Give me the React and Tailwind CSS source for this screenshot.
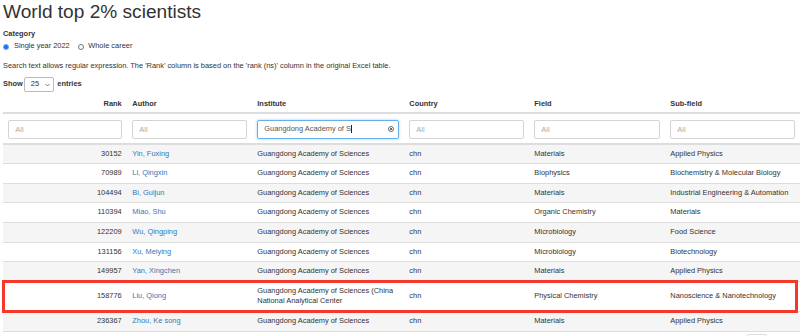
import React from 'react';

const rows = [
  ['30152', 'Yin, Fuxing', 'Guangdong Academy of Sciences', 'chn', 'Materials', 'Applied Physics'],
  ['70989', 'Li, Qingxin', 'Guangdong Academy of Sciences', 'chn', 'Biophysics', 'Biochemistry & Molecular Biology'],
  ['104494', 'Bi, Guijun', 'Guangdong Academy of Sciences', 'chn', 'Materials', 'Industrial Engineering & Automation'],
  ['110394', 'Miao, Shu', 'Guangdong Academy of Sciences', 'chn', 'Organic Chemistry', 'Materials'],
  ['122209', 'Wu, Qingping', 'Guangdong Academy of Sciences', 'chn', 'Microbiology', 'Food Science'],
  ['131156', 'Xu, Meiying', 'Guangdong Academy of Sciences', 'chn', 'Microbiology', 'Biotechnology'],
  ['149957', 'Yan, Xingchen', 'Guangdong Academy of Sciences', 'chn', 'Materials', 'Applied Physics'],
  ['158776', 'Liu, Qiong', 'Guangdong Academy of Sciences (China National Analytical Center', 'chn', 'Physical Chemistry', 'Nanoscience & Nanotechnology'],
  ['236367', 'Zhou, Ke song', 'Guangdong Academy of Sciences', 'chn', 'Materials', 'Applied Physics'],
];

const headers = ['Rank', 'Author', 'Institute', 'Country', 'Field', 'Sub-field'];

const FilterInput = () => (
  <input
    placeholder="All"
    className="block w-full h-[19px] pl-[6px] border border-[#d4d4d4] rounded-[2px] bg-white placeholder:text-[#aaa] outline-none"
  />
);

const App = () => {
  return (
    <div className="w-[800px] h-[336px] overflow-hidden bg-white text-[#333] font-['Liberation_Sans',Arial,sans-serif] text-[7.43px] leading-[10.6px]">
      <div className="pl-[3px]">
        <h1 className="text-[19.1px] leading-[23px]">World top 2% scientists</h1>

        <div className="mt-[5px] h-[11px] leading-[11px] font-bold">Category</div>

        <div className="mt-[2px] h-[11px] flex items-center">
          <span className="w-[6px] h-[6px] rounded-full bg-[#1a73e8] border border-[#6ea3ee]"></span>
          <span className="ml-[5px]">Single year 2022</span>
          <span className="ml-[8px] w-[6px] h-[6px] rounded-full border border-[#777]"></span>
          <span className="ml-[4.5px]">Whole career</span>
        </div>

        <div className="mt-[8px] h-[11px] leading-[11px]">
          Search text allows regular expression. The 'Rank' column is based on the 'rank (ns)' column in the original Excel table.
        </div>

        <div className="mt-[5px] h-[17px] flex items-center font-bold">
          <span>Show</span>
          <div className="ml-[1.5px] w-[30px] h-[15px] flex items-center justify-between pl-[5.5px] pr-[3.5px] border border-[#bbb] rounded-[2px] font-normal">
            <span>25</span>
            <svg width="5" height="4" viewBox="0 0 5 4" fill="none" stroke="#555" strokeWidth="0.8">
              <path d="M0.5 1 L2.5 3 L4.5 1" />
            </svg>
          </div>
          <span className="ml-[3px]">entries</span>
        </div>
      </div>

      <table className="ml-[3px] w-[797px] table-fixed">
        <colgroup>
          <col className="w-[124px]" />
          <col className="w-[125px]" />
          <col className="w-[152px]" />
          <col className="w-[125px]" />
          <col className="w-[136px]" />
          <col className="w-[135px]" />
        </colgroup>
        <thead>
          <tr>
            {headers.map((h, i) => (
              <th
                key={h}
                className={`px-[5.3px] pt-[6px] pb-[2.5px] font-bold border-b-2 border-[#ddd] ${i === 0 ? 'text-right' : 'text-left'}`}
              >
                {h}
              </th>
            ))}
          </tr>
          <tr>
            {headers.map((h) =>
              h === 'Institute' ? (
                <td key={h} className="px-[5.3px] pt-[5.5px] pb-[4px] border-b-2 border-[#ddd]">
                  <div className="h-[19px] flex items-center pl-[6px] pr-[4px] border border-[#66afe9] rounded-[2px] shadow-[0_0_3px_rgba(102,175,233,0.6)] text-[#555]">
                    <span>Guangdong Academy of S</span>
                    <span className="w-px h-[8px] bg-[#222]"></span>
                    <svg className="ml-auto" width="6" height="6" viewBox="0 0 6 6" fill="none" stroke="#444" strokeWidth="0.8">
                      <circle cx="3" cy="3" r="2.5" />
                      <path d="M1.9 1.9 L4.1 4.1 M4.1 1.9 L1.9 4.1" />
                    </svg>
                  </div>
                </td>
              ) : (
                <td key={h} className="px-[5.3px] pt-[5.5px] pb-[4px] border-b-2 border-[#ddd]">
                  <FilterInput />
                </td>
              )
            )}
          </tr>
        </thead>
        <tbody>
          {rows.map((r, idx) => (
            <tr key={r[0]} className={idx % 2 === 0 ? 'bg-[#f5f5f5]' : 'bg-white'}>
              {r.map((c, i) => (
                <td
                  key={i}
                  className={`px-[5.3px] py-[4px] align-middle border-b border-[#ddd] ${i === 0 ? 'text-right relative' : ''} ${i === 1 ? 'text-[#337ab7]' : ''}`}
                >
                  {c}
                  {i === 0 && r[0] === '158776' && (
                    <div className="absolute left-[-1px] top-[-1.5px] bottom-[-2px] w-[796px] border-[3px] border-[#f4392c] pointer-events-none"></div>
                  )}
                </td>
              ))}
            </tr>
          ))}
        </tbody>
      </table>

      <div className="mt-[2px] flex justify-end pr-[33px]">
        <div className="w-[20px] h-[15px] border border-[#ddd] rounded-[2px]"></div>
      </div>
    </div>
  );
};

export default App;
